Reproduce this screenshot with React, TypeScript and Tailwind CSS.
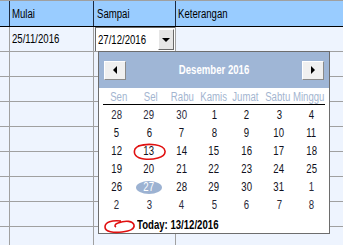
import React from "react";

const font = "font-['Liberation_Sans',Arial,sans-serif]";

const dayNames = ["Sen", "Sel", "Rabu", "Kamis", "Jumat", "Sabtu", "Minggu"];

const weeks = [
  [28, 29, 30, 1, 2, 3, 4],
  [5, 6, 7, 8, 9, 10, 11],
  [12, 13, 14, 15, 16, 17, 18],
  [19, 20, 21, 22, 23, 24, 25],
  [26, 27, 28, 29, 30, 31, 1],
  [2, 3, 4, 5, 6, 7, 8],
];

// the screenshot uses a narrow face; squeeze Liberation Sans to match
function N({ children, center }: { children: React.ReactNode; center?: boolean }) {
  return (
    <span
      className={`inline-block whitespace-nowrap scale-x-[0.8] ${center ? "origin-center" : "origin-left"}`}
    >
      {children}
    </span>
  );
}

function GridRow({ first }: { first?: boolean }) {
  return (
    <div className="flex h-[25px] border-b border-[#a0a0a0]">
      <div className="w-[10px] shrink-0 border-r border-[#a0a0a0]" />
      <div className="w-[84px] shrink-0 border-r border-[#a0a0a0] pl-[2px] pt-[3px] text-[12px] text-black">
        {first ? <N>25/11/2016</N> : null}
      </div>
      <div className="w-[82px] shrink-0 border-r border-[#a0a0a0]" />
      <div className="flex-1" />
    </div>
  );
}

function Calendar() {
  return (
    <div className="absolute left-[98px] top-[51px] w-[232px] h-[183px] border border-[#6d6d6d] bg-white">
      {/* title bar */}
      <div className="flex h-[36px] items-center justify-between bg-[#9fb6d6] px-[5px]">
        <button className="flex h-[19px] w-[22px] items-center justify-center border border-t-white border-l-white border-r-[#8a8a8a] border-b-[#8a8a8a] bg-[#f0f0f0]">
          <span className="h-0 w-0 border-y-[4px] border-r-[4px] border-y-transparent border-r-black" />
        </button>
        <span className="text-[12px] font-bold text-white">
          <N center>Desember 2016</N>
        </span>
        <button className="flex h-[19px] w-[22px] items-center justify-center border border-t-white border-l-white border-r-[#8a8a8a] border-b-[#8a8a8a] bg-[#f0f0f0]">
          <span className="h-0 w-0 border-y-[4px] border-l-[4px] border-y-transparent border-l-black" />
        </button>
      </div>
      {/* day names */}
      <div className="mx-[4px] grid h-[17px] grid-cols-7 items-center border-b border-black text-center text-[12px] text-[#a3b5d0]">
        {dayNames.map((d) => (
          <span key={d} className="flex justify-center">
            <N center>{d}</N>
          </span>
        ))}
      </div>
      {/* dates */}
      <div className="mt-[1px] px-[1px]">
        {weeks.map((w, wi) => (
          <div key={wi} className="grid h-[18px] grid-cols-7 items-center text-center text-[12px]">
            {w.map((d, di) => {
              const selected = wi === 4 && di === 1;
              const other = (wi === 0 && d > 20) || (wi >= 4 && d < 10);
              return (
                <div key={di} className="flex justify-center">
                  {selected ? (
                    <span className="flex h-[13px] w-[26px] items-center justify-center rounded-[50%] bg-[#9cb2d2] text-white">
                      <N center>{d}</N>
                    </span>
                  ) : (
                    <span className={other ? "text-[#2a2a3a]" : "text-[#101020]"}>
                      <N center>{d}</N>
                    </span>
                  )}
                </div>
              );
            })}
          </div>
        ))}
      </div>
      {/* today */}
      <div className="mt-[3px] flex h-[16px] items-center pl-[38px] text-[12px] font-bold text-black">
        <N>Today: 13/12/2016</N>
      </div>
      {/* red marks */}
      <svg className="absolute left-[33px] top-[91px] h-[18px] w-[34px]" viewBox="0 0 34 18" fill="none">
        <path
          d="M6 3 C 16 0, 32 1, 33 8 C 34 15, 20 17, 12 16 C 4 15, 1 11, 3 6 C 5 3, 9 2, 13 2"
          stroke="#e01010"
          strokeWidth="1.6"
        />
      </svg>
      <svg className="absolute left-[5px] top-[166px] h-[16px] w-[33px]" viewBox="0 0 33 16" fill="none">
        <path
          d="M17 3 C 8 2, 1 4, 1 9 C 1 14, 10 15, 18 14 C 26 13, 31 11, 30 7 C 29 3, 22 2, 14 5 C 11 6, 10 8, 12 9"
          stroke="#e01010"
          strokeWidth="1.6"
        />
      </svg>
    </div>
  );
}

export default function App() {
  return (
    <div className={`relative h-[245px] w-[343px] overflow-hidden bg-[#eef4fe] ${font}`}>
      {/* header */}
      <div className="flex h-[27px] border-t border-b border-t-[#a0a0a0] border-b-black bg-[#99ccff] text-[12px] text-black">
        <div className="w-[10px] shrink-0 border-r border-[#1c2a40]" />
        <div className="flex w-[84px] shrink-0 items-center border-r border-[#1c2a40] pl-[2px]">
          <N>Mulai</N>
        </div>
        <div className="flex w-[82px] shrink-0 items-center border-r border-[#1c2a40] pl-[3px]">
          <N>Sampai</N>
        </div>
        <div className="flex flex-1 items-center pl-[2px]">
          <N>Keterangan</N>
        </div>
      </div>
      {Array.from({ length: 9 }).map((_, i) => (
        <GridRow key={i} first={i === 0} />
      ))}
      {/* date editor */}
      <div className="absolute left-[95px] top-[27px] flex h-[24px] w-[80px] border-t border-l border-[#696969] bg-white">
        <span className="flex-1 pl-[2px] pt-[3px] text-[12px] text-black">
          <N>27/12/2016</N>
        </span>
        <div className="mr-[1px] mt-[1px] flex h-[21px] w-[17px] items-center justify-center border border-t-white border-l-white border-r-[#696969] border-b-[#696969] bg-[#e6e6e6]">
          <span className="h-0 w-0 border-x-[4px] border-t-[4px] border-x-transparent border-t-black" />
        </div>
      </div>
      <Calendar />
    </div>
  );
}
